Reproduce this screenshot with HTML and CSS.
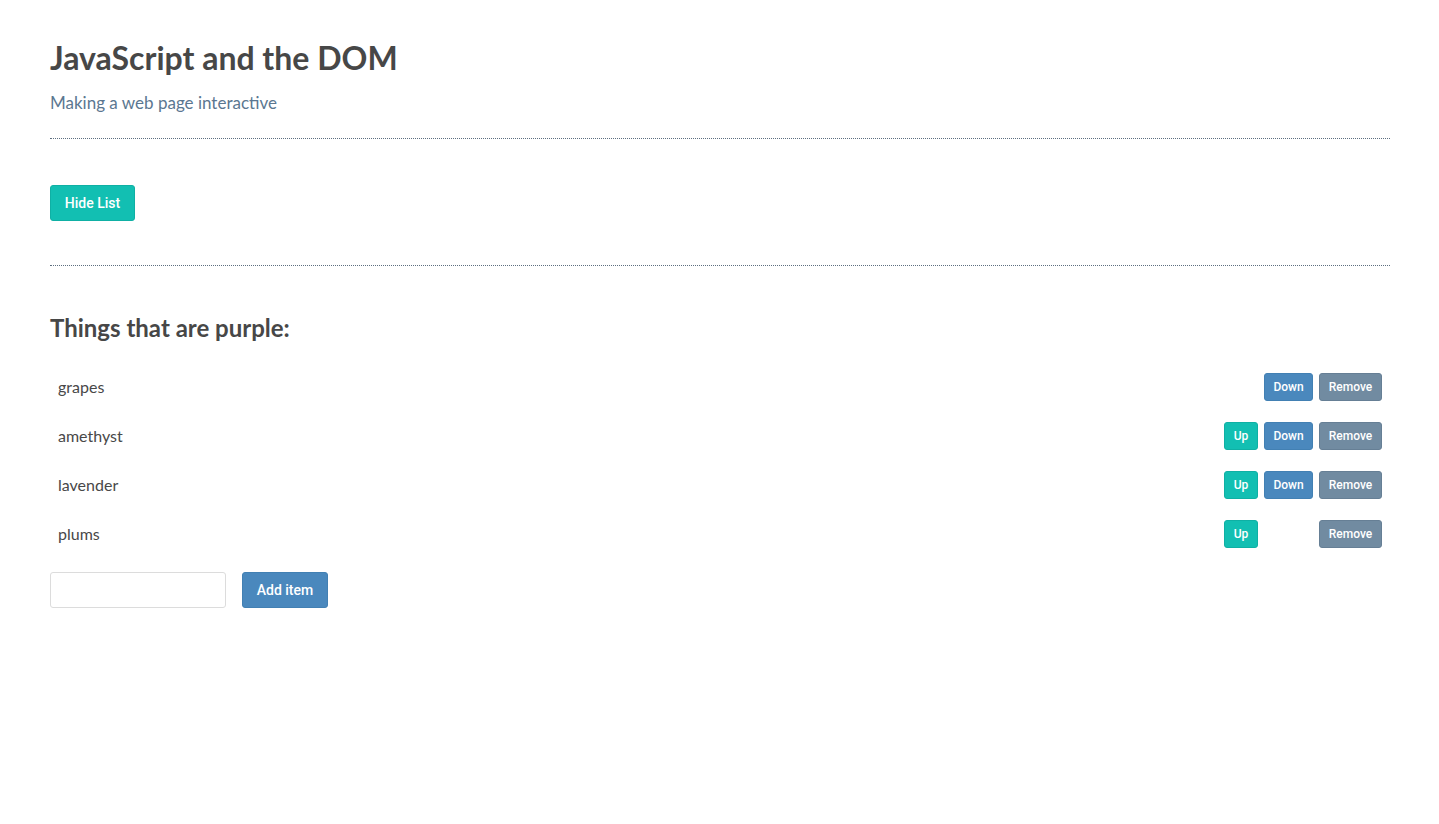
FILE: index.html
```html
<!DOCTYPE html>
<html lang="en">
<head>
<meta charset="utf-8">
<title>JavaScript and the DOM</title>
<link rel="stylesheet" href="styles.css">
</head>
<body>
<div class="container">
  <h1 class="title">JavaScript and the DOM</h1>
  <p class="subtitle">Making a web page interactive</p>
  <hr class="rule">
  <button class="btn btn-teal btn-lg toggle">Hide List</button>
  <hr class="rule rule-2">
  <div class="list">
    <h2 class="list-title">Things that are purple:</h2>
    <ul class="items">
      <li class="item"><span class="item-text">grapes</span><span class="actions"><button class="btn btn-blue">Down</button><button class="btn btn-gray">Remove</button></span></li>
      <li class="item"><span class="item-text">amethyst</span><span class="actions"><button class="btn btn-teal">Up</button><button class="btn btn-blue">Down</button><button class="btn btn-gray">Remove</button></span></li>
      <li class="item"><span class="item-text">lavender</span><span class="actions"><button class="btn btn-teal">Up</button><button class="btn btn-blue">Down</button><button class="btn btn-gray">Remove</button></span></li>
      <li class="item"><span class="item-text">plums</span><span class="actions"><button class="btn btn-teal">Up</button><span class="spacer"></span><button class="btn btn-gray">Remove</button></span></li>
    </ul>
    <div class="add-row">
      <input class="add-input" type="text">
      <button class="btn btn-blue btn-lg add-btn">Add item</button>
    </div>
  </div>
</div>
</body>
</html>
```

FILE: styles.css
```css
html, body {
  margin: 0;
  padding: 0;
  background: #ffffff;
}
body {
  font-family: Lato, "Open Sans", sans-serif;
  color: #484848;
}
.container {
  padding: 0 49px 0 50px;
}
.title {
  margin: 39px 0 0;
  font-size: 32px;
  line-height: 38px;
  font-weight: 700;
  color: #474747;
}
.subtitle {
  margin: 14px 0 0;
  font-size: 17px;
  line-height: 24px;
  color: #5b7791;
}
.rule {
  border: none;
  border-top: 1px dotted #5d6f80;
  margin: 23px 0 0;
  height: 0;
}
.rule-2 {
  margin-top: 44px;
}
.btn {
  font-family: Roboto, "Liberation Sans", Arial, sans-serif;
  font-size: 12px;
  font-weight: 500;
  color: #ffffff;
  border: 1px solid transparent;
  border-radius: 3px;
  height: 28px;
  padding: 0 8px;
  cursor: pointer;
  box-sizing: border-box;
  white-space: nowrap;
}
.btn-lg {
  height: 36px;
  font-size: 14px;
  padding: 0 14px;
}
.btn-teal {
  background: #12bfb2;
  border-color: #0fb0a4;
}
.btn-blue {
  background: #4a88bd;
  border-color: #4280b3;
}
.btn-gray {
  background: #718ba1;
  border-color: #667f95;
}
.toggle {
  margin-top: 46px;
  display: block;
  width: 85px;
  padding: 0;
}
.list-title {
  margin: 47px 0 0;
  font-size: 24px;
  line-height: 30px;
  font-weight: 700;
  color: #474747;
}
.items {
  list-style: none;
  margin: 19px 0 0;
  padding: 0;
}
.item {
  display: flex;
  align-items: center;
  justify-content: space-between;
  height: 49px;
  padding: 0 8px;
  font-size: 16px;
}
.actions {
  display: flex;
  gap: 6px;
}
.actions .btn-teal { width: 34px; padding: 0; }
.actions .btn-blue { width: 49px; padding: 0; }
.actions .btn-gray { width: 63px; padding: 0; }
.spacer {
  width: 49px;
}
.add-row {
  display: flex;
  gap: 16px;
  margin-top: 14px;
}
.add-input {
  width: 176px;
  height: 36px;
  box-sizing: border-box;
  border: 1px solid #dcdcdc;
  border-radius: 3px;
  padding: 0 8px;
  font-family: Lato, sans-serif;
  font-size: 16px;
}
.add-btn {
  width: 86px;
  padding: 0;
}
```
